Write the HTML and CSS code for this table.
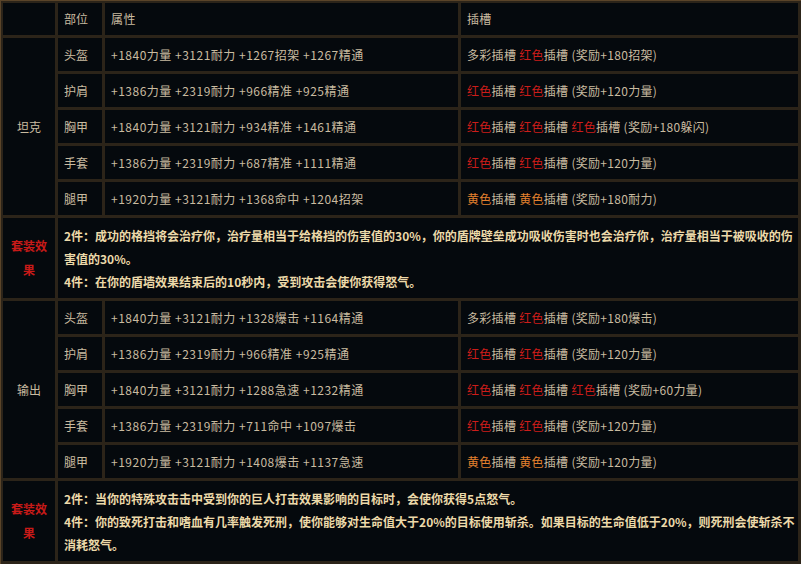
FILE: index.html
```html
<!DOCTYPE html>
<html lang="zh-CN">
<head>
<meta charset="utf-8">
<title>套装属性</title>
<link rel="stylesheet" href="styles.css">
</head>
<body>
<table class="gear">
  <colgroup>
    <col class="c-role">
    <col class="c-slot">
    <col class="c-attr">
    <col class="c-socket">
  </colgroup>
  <tr class="head">
    <td></td>
    <td>部位</td>
    <td class="attr">属性</td>
    <td class="socket">插槽</td>
  </tr>
  <tr>
    <td class="role" rowspan="5">坦克</td>
    <td>头盔</td>
    <td class="attr">+1840力量 +3121耐力 +1267招架 +1267精通</td>
    <td class="socket">多彩插槽 <span class="red">红色</span>插槽 (奖励+180招架)</td>
  </tr>
  <tr>
    <td>护肩</td>
    <td class="attr">+1386力量 +2319耐力 +966精准 +925精通</td>
    <td class="socket"><span class="red">红色</span>插槽 <span class="red">红色</span>插槽 (奖励+120力量)</td>
  </tr>
  <tr>
    <td>胸甲</td>
    <td class="attr">+1840力量 +3121耐力 +934精准 +1461精通</td>
    <td class="socket"><span class="red">红色</span>插槽 <span class="red">红色</span>插槽 <span class="red">红色</span>插槽 (奖励+180躲闪)</td>
  </tr>
  <tr>
    <td>手套</td>
    <td class="attr">+1386力量 +2319耐力 +687精准 +1111精通</td>
    <td class="socket"><span class="red">红色</span>插槽 <span class="red">红色</span>插槽 (奖励+120力量)</td>
  </tr>
  <tr>
    <td>腿甲</td>
    <td class="attr">+1920力量 +3121耐力 +1368命中 +1204招架</td>
    <td class="socket"><span class="yellow">黄色</span>插槽 <span class="yellow">黄色</span>插槽 (奖励+180耐力)</td>
  </tr>
  <tr class="set">
    <td class="set-label">套装效果</td>
    <td class="set-text" colspan="3">2件：成功的格挡将会治疗你，治疗量相当于给格挡的伤害值的30%，你的盾牌壁垒成功吸收伤害时也会治疗你，治疗量相当于被吸收的伤害值的30%。<br>4件：在你的盾墙效果结束后的10秒内，受到攻击会使你获得怒气。</td>
  </tr>
  <tr>
    <td class="role" rowspan="5">输出</td>
    <td>头盔</td>
    <td class="attr">+1840力量 +3121耐力 +1328爆击 +1164精通</td>
    <td class="socket">多彩插槽 <span class="red">红色</span>插槽 (奖励+180爆击)</td>
  </tr>
  <tr>
    <td>护肩</td>
    <td class="attr">+1386力量 +2319耐力 +966精准 +925精通</td>
    <td class="socket"><span class="red">红色</span>插槽 <span class="red">红色</span>插槽 (奖励+120力量)</td>
  </tr>
  <tr>
    <td>胸甲</td>
    <td class="attr">+1840力量 +3121耐力 +1288急速 +1232精通</td>
    <td class="socket"><span class="red">红色</span>插槽 <span class="red">红色</span>插槽 <span class="red">红色</span>插槽 (奖励+60力量)</td>
  </tr>
  <tr>
    <td>手套</td>
    <td class="attr">+1386力量 +2319耐力 +711命中 +1097爆击</td>
    <td class="socket"><span class="red">红色</span>插槽 <span class="red">红色</span>插槽 (奖励+120力量)</td>
  </tr>
  <tr>
    <td>腿甲</td>
    <td class="attr">+1920力量 +3121耐力 +1408爆击 +1137急速</td>
    <td class="socket"><span class="yellow">黄色</span>插槽 <span class="yellow">黄色</span>插槽 (奖励+120力量)</td>
  </tr>
  <tr class="set">
    <td class="set-label">套装效果</td>
    <td class="set-text" colspan="3">2件：当你的特殊攻击击中受到你的巨人打击效果影响的目标时，会使你获得5点怒气。<br>4件：你的致死打击和嗜血有几率触发死刑，使你能够对生命值大于20%的目标使用斩杀。如果目标的生命值低于20%，则死刑会使斩杀不消耗怒气。</td>
  </tr>
</table>
</body>
</html>
```
FILE: styles.css
```css
html, body {
  margin: 0;
  padding: 0;
  background: #ffffff;
}

.gear {
  width: 801px;
  border-collapse: separate;
  border-spacing: 3px;
  background: #2c2419;
  table-layout: fixed;
  font-family: "Noto Sans CJK SC", "Microsoft YaHei", sans-serif;
  font-size: 12px;
  color: #c9bba0;
  box-shadow: inset 1px 1px 0 #5a4429;
}

.c-role { width: 52px; }
.c-slot { width: 44px; }
.c-attr { width: 353px; }
.c-socket { width: 337px; }

.gear td {
  background: #05090d;
  padding: 0 6px;
  height: 33px;
  line-height: 16px;
  vertical-align: middle;
  white-space: nowrap;
}

.gear td.attr {
  letter-spacing: 0.5px;
}

.gear td.socket {
  letter-spacing: 0.3px;
}

.gear .head td {
  height: 32px;
}

.gear td.role {
  text-align: center;
  padding: 0;
}

.gear td.set-label {
  text-align: center;
  padding: 0 4px;
  color: #c81a18;
  font-weight: bold;
  line-height: 24px;
  white-space: normal;
  height: auto;
}

.gear td.set-text {
  white-space: normal;
  font-weight: bold;
  color: #ecd9a9;
  line-height: 23px;
  padding: 6px 0 5px 6px;
  height: auto;
}

.red {
  color: #cc1d1a;
}

.yellow {
  color: #e2802e;
}
```
